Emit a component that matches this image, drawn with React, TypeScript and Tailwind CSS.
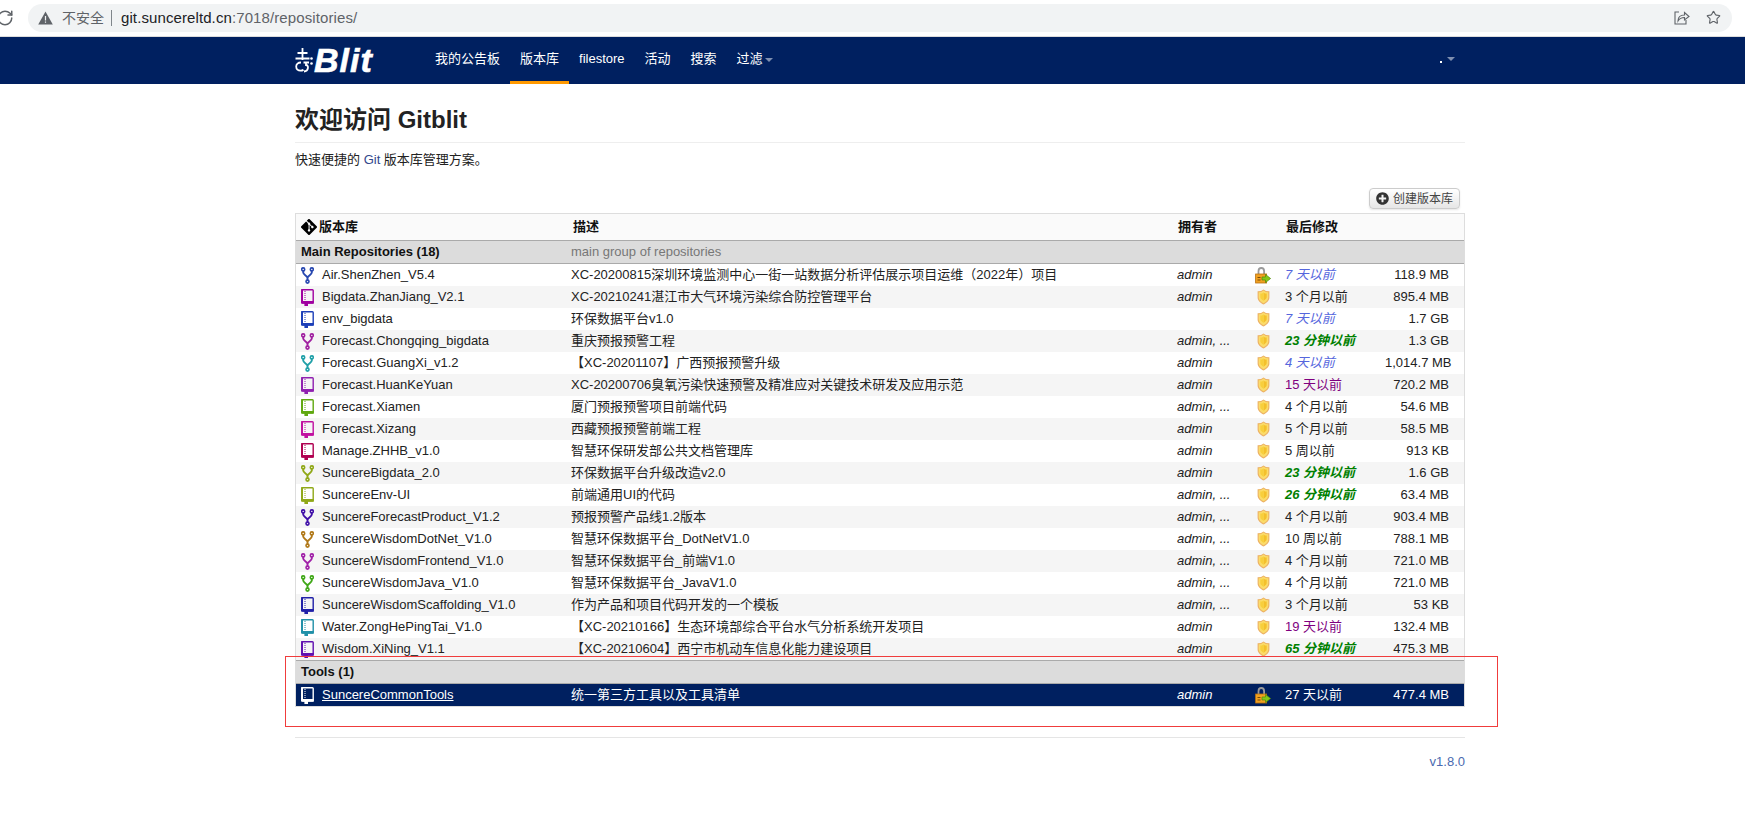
import React from "react";
import { RotateCw, Star } from "lucide-react";
import { SiGit } from "react-icons/si";
import { FaPlusCircle } from "react-icons/fa";

type Repo = { name: string; desc: string; owner: string; lock?: boolean; time: string; kind?: "blue" | "green" | "purple"; size: string; icon: "fork" | "book"; color: string };

const repos: Repo[] = [
  { name: "Air.ShenZhen_V5.4", desc: "XC-20200815深圳环境监测中心一街一站数据分析评估展示项目运维（2022年）项目", owner: "admin", lock: true, time: "7 天以前", kind: "blue", size: "118.9 MB", icon: "fork", color: "#2848b0" },
  { name: "Bigdata.ZhanJiang_V2.1", desc: "XC-20210241湛江市大气环境污染综合防控管理平台", owner: "admin", time: "3 个月以前", size: "895.4 MB", icon: "book", color: "#a000a0" },
  { name: "env_bigdata", desc: "环保数据平台v1.0", owner: "", time: "7 天以前", kind: "blue", size: "1.7 GB", icon: "book", color: "#1c3fb8" },
  { name: "Forecast.Chongqing_bigdata", desc: "重庆预报预警工程", owner: "admin, ...", time: "23 分钟以前", kind: "green", size: "1.3 GB", icon: "fork", color: "#a020a0" },
  { name: "Forecast.GuangXi_v1.2", desc: "【XC-20201107】广西预报预警升级", owner: "admin", time: "4 天以前", kind: "blue", size: "1,014.7 MB", icon: "fork", color: "#20a0a8" },
  { name: "Forecast.HuanKeYuan", desc: "XC-20200706臭氧污染快速预警及精准应对关键技术研发及应用示范", owner: "admin", time: "15 天以前", kind: "purple", size: "720.2 MB", icon: "book", color: "#9020b0" },
  { name: "Forecast.Xiamen", desc: "厦门预报预警项目前端代码", owner: "admin, ...", time: "4 个月以前", size: "54.6 MB", icon: "book", color: "#60a810" },
  { name: "Forecast.Xizang", desc: "西藏预报预警前端工程", owner: "admin", time: "5 个月以前", size: "58.5 MB", icon: "book", color: "#c010a0" },
  { name: "Manage.ZHHB_v1.0", desc: "智慧环保研发部公共文档管理库", owner: "admin", time: "5 周以前", size: "913 KB", icon: "book", color: "#b00050" },
  { name: "SuncereBigdata_2.0", desc: "环保数据平台升级改造v2.0", owner: "admin", time: "23 分钟以前", kind: "green", size: "1.6 GB", icon: "fork", color: "#90a818" },
  { name: "SuncereEnv-UI", desc: "前端通用UI的代码", owner: "admin, ...", time: "26 分钟以前", kind: "green", size: "63.4 MB", icon: "book", color: "#90a818" },
  { name: "SuncereForecastProduct_V1.2", desc: "预报预警产品线1.2版本", owner: "admin, ...", time: "4 个月以前", size: "903.4 MB", icon: "fork", color: "#4010a8" },
  { name: "SuncereWisdomDotNet_V1.0", desc: "智慧环保数据平台_DotNetV1.0", owner: "admin, ...", time: "10 周以前", size: "788.1 MB", icon: "fork", color: "#b07818" },
  { name: "SuncereWisdomFrontend_V1.0", desc: "智慧环保数据平台_前端V1.0", owner: "admin, ...", time: "4 个月以前", size: "721.0 MB", icon: "fork", color: "#a020a8" },
  { name: "SuncereWisdomJava_V1.0", desc: "智慧环保数据平台_JavaV1.0", owner: "admin, ...", time: "4 个月以前", size: "721.0 MB", icon: "fork", color: "#40a818" },
  { name: "SuncereWisdomScaffolding_V1.0", desc: "作为产品和项目代码开发的一个模板", owner: "admin, ...", time: "3 个月以前", size: "53 KB", icon: "book", color: "#2020a8" },
  { name: "Water.ZongHePingTai_V1.0", desc: "【XC-20210166】生态环境部综合平台水气分析系统开发项目", owner: "admin", time: "19 天以前", kind: "purple", size: "132.4 MB", icon: "book", color: "#2090a8" },
  { name: "Wisdom.XiNing_V1.1", desc: "【XC-20210604】西宁市机动车信息化能力建设项目", owner: "admin", time: "65 分钟以前", kind: "green", size: "475.3 MB", icon: "book", color: "#6010b0" },
];

const cols = "grid grid-cols-[275px_606px_78px_30px_100px_79px] items-center";

function Fork({ color }: { color: string }) {
  return (
    <svg width="13" height="17" viewBox="0 0 13 17" fill="none" stroke={color} strokeWidth="1.6">
      <circle cx="2.2" cy="2.4" r="1.5" />
      <circle cx="10.8" cy="2.4" r="1.5" />
      <circle cx="6.5" cy="14.6" r="1.5" />
      <path d="M2.2 4v1.6c0 2.2 4.3 3 4.3 5.4v2M10.8 4v1.6c0 2.2-4.3 3-4.3 5.4" strokeWidth="1.9" />
    </svg>
  );
}

function Book({ color }: { color: string }) {
  return (
    <svg width="13" height="17" viewBox="0 0 13 17" fill="none">
      <rect x="0.8" y="0.7" width="11.4" height="13.3" rx="0.8" stroke={color} strokeWidth="1.4" />
      <rect x="0.2" y="0" width="1.8" height="14" fill={color} />
      <rect x="0.2" y="12" width="12.6" height="2.6" fill={color} />
      <rect x="3.4" y="14" width="3.6" height="3" fill={color} />
      <path d="M4 2v9.500" stroke={color} strokeWidth="1" strokeDasharray="1 1" />
    </svg>
  );
}

function Shield() {
  return (
    <svg width="13" height="16" viewBox="0 0 13 16">
      <path d="M6.500 0.400 9 2l3.400.2v6.300c0 3.200-3 5.600-5.900 7.100C3.600 14.100.6 11.700.6 8.500V2.200L4 2z" fill="#ecb266" />
      <path d="M6.500 1.600 8.700 3l2.600.2v5.200c0 2.600-2.500 4.700-4.800 5.900-2.300-1.200-4.800-3.300-4.800-5.900V3.200L4.300 3z" fill="#fbdc6a" />
      <path d="M6.500 3.400v8.400c1.600-1 3.200-2.200 3.200-3.800V4.500L8 4.400z" fill="#f4c02c" />
      <path d="M6.500 3.400v8.400c-1.600-1-3.200-2.200-3.200-3.800V4.500L5 4.400z" fill="#f8cf3c" />
    </svg>
  );
}

function Lock() {
  return (
    <svg width="16" height="17" viewBox="0 0 16 17">
      <path d="M3.500 7V4.200C3.500 2.300 4.700 1 6.300 1s2.800 1.300 2.800 3.200V7" fill="none" stroke="#9a9a9a" strokeWidth="1.800" />
      <rect x="0.600" y="7" width="11" height="9" fill="#f0a020" stroke="#b87010" strokeWidth="0.800" />
      <rect x="2.500" y="10" width="3" height="1" fill="#7a4a08" />
      <rect x="2.500" y="12.500" width="3" height="1" fill="#7a4a08" />
      <path d="M7 10h3.500V7.400L15.600 11.500l-5.100 4.100V13H7z" fill="#84c818" stroke="#4f8a08" strokeWidth="0.700" />
    </svg>
  );
}

function LogoMark() {
  return (
    <svg width="19" height="25" viewBox="0 0 19 25" fill="none" stroke="#ffffff" strokeWidth="1.800">
      <path d="M7.500 0v12M2.500 5h10M0.500 10.500h14" />
      <path d="M6 14.500c-3 0-4.800 1.600-4.800 4s1.800 4.200 4.300 4.200c1.300 0 2.200-.4 3-1" />
      <path d="M8.500 14.500h5.500M11 14.500v2.500c3 0 2.800 6-2 6.500" />
      <circle cx="16.500" cy="10.500" r="1.300" fill="#ffffff" stroke="none" />
      <circle cx="16.500" cy="15.500" r="1.300" fill="#ffffff" stroke="none" />
    </svg>
  );
}

function Row({ repo, index }: { repo: Repo; index: number }) {
  const bg = index % 2 === 1 ? "bg-[#f5f5f5]" : "bg-white";
  const timeClass =
    repo.kind === "blue"
      ? "italic text-[#5566dd]"
      : repo.kind === "green"
        ? "italic font-bold text-[#008000]"
        : repo.kind === "purple"
          ? "text-[#800080]"
          : "";
  return (
    <div className={`${cols} h-[22px] ${bg}`}>
      <div className="flex items-center pl-[5px] gap-[8px] whitespace-nowrap">
        {repo.icon === "fork" ? <Fork color={repo.color} /> : <Book color={repo.color} />}
        <span>{repo.name}</span>
      </div>
      <div className="whitespace-nowrap">{repo.desc}</div>
      <div className="italic whitespace-nowrap">{repo.owner}</div>
      <div className="flex w-[16px] justify-center">{repo.lock ? <Lock /> : <Shield />}</div>
      <div className={`whitespace-nowrap ${timeClass}`}>{repo.time}</div>
      <div className="text-right pr-[15px] whitespace-nowrap">{repo.size}</div>
    </div>
  );
}

function GroupRow({ title, desc }: { title: string; desc?: string }) {
  return (
    <div className={`${cols} h-[24px] bg-[#dcdcdc] border-y border-[#aaaaaa]`}>
      <div className="pl-[5px] font-bold text-[#111]">{title}</div>
      <div className="text-[#777777]">{desc}</div>
    </div>
  );
}

export default function App() {
  return (
    <div className="relative h-[831px] overflow-hidden bg-white text-[13px] leading-[18px] text-[#222222] font-['Liberation_Sans','Noto_Sans_CJK_SC',sans-serif]">
      <div className="flex h-[37px] items-center border-b border-[#dddddd] pb-[1px]">
        <RotateCw size={18} strokeWidth={2} className="-ml-[4px] text-[#5f6368]" />
        <div className="ml-[14px] flex h-[28px] w-[1704px] items-center rounded-full bg-[#f1f3f4] pl-[10px] pr-[11px]">
          <svg width="15" height="14" viewBox="0 0 15 14" fill="#5f6368">
            <path d="M7.500 0.500 14.800 13.500H0.200z" />
            <path d="M6.900 5h1.200v4.500H6.900zM6.900 10.400h1.200v1.300H6.900z" fill="#f1f3f4" />
          </svg>
          <span className="ml-[9px] text-[14px] text-[#5f6368]">不安全</span>
          <span className="ml-[7px] h-[16px] w-px bg-[#80868b]" />
          <span className="ml-[9px] text-[15px] tracking-[0.1px] text-[#202124]">
            git.suncereltd.cn<span className="text-[#5f6368]">:7018/repositories/</span>
          </span>
          <div className="ml-auto flex items-center gap-[16px]">
            <svg width="16" height="15" viewBox="0 0 16 15" fill="none" stroke="#5f6368" strokeWidth="1.100">
              <path d="M5 2H1v12h11v-4" />
              <path d="M4 11c0-4 2.500-6 6.500-6V2.500L15 6.500 10.500 10V7.500C7.500 7.500 5.500 8.500 4 11z" />
            </svg>
            <Star size={15} strokeWidth={1.800} className="text-[#5f6368]" />
          </div>
        </div>
      </div>

      <div className="h-[47px] bg-[#002060] text-white">
        <div className="ml-[295px] flex h-[47px] w-[1170px] items-stretch">
          <div className="flex w-[130px] items-center pb-[1px]">
            <LogoMark />
            <span className="font-bold italic text-[34px] leading-none tracking-[1px] [-webkit-text-stroke:0.6px_white]">Blit</span>
          </div>
          <div className="flex items-stretch">
            <a className="flex items-center px-[10px] pb-[3px]">我的公告板</a>
            <a className="flex items-center border-b-[3px] border-[#ff9900] px-[10px]">版本库</a>
            <a className="flex items-center px-[10px] pb-[3px]">filestore</a>
            <a className="flex items-center px-[10px] pb-[3px]">活动</a>
            <a className="flex items-center px-[10px] pb-[3px]">搜索</a>
            <a className="flex items-center gap-[2px] px-[10px] pb-[3px]">
              过滤
              <span className="mt-[1px] h-0 w-0 border-x-[4px] border-t-[4px] border-x-transparent border-t-[#7f8fb0]" />
            </a>
          </div>
          <div className="ml-auto mr-[10px] flex items-center gap-[5px] pb-[3px]">
            <span className="mt-[6px] h-[2px] w-[2px] bg-white" />
            <span className="h-0 w-0 border-x-[4px] border-t-[4px] border-x-transparent border-t-[#7f8fb0]" />
          </div>
        </div>
      </div>

      <div className="ml-[295px] w-[1170px]">
        <h1 className="border-b border-[#eeeeee] pt-[21px] pb-[7px] text-[24px] leading-[30px] font-bold">欢迎访问 Gitblit</h1>
        <p className="mt-[8px]">
          快速便捷的 <span className="text-[#33478c]">Git</span> 版本库管理方案。
        </p>
        <div className="mt-[19px] flex justify-end pr-[5px]">
          <button className="flex h-[21px] w-[91px] items-center justify-center gap-[4px] rounded-[4px] border border-[#cccccc] bg-gradient-to-b from-white to-[#e6e6e6] text-[12px] text-[#444444] shadow-[0_1px_2px_rgba(0,0,0,0.1)]">
            <FaPlusCircle size={13} className="text-[#333333]" />
            创建版本库
          </button>
        </div>
        <div className="mt-[4px] border border-t-[1px] border-[#dddddd]">
          <div className={`${cols} h-[26px] bg-[#fafafa] font-bold text-[#111]`}>
            <div className="flex items-center gap-[2px] pl-[5px]">
              <SiGit size={16} className="text-black" />
              版本库
            </div>
            <div className="pl-[2px]">描述</div>
            <div className="pl-[1px]">拥有者</div>
            <div />
            <div className="pl-[1px]">最后修改</div>
            <div />
          </div>
          <GroupRow title="Main Repositories (18)" desc="main group of repositories" />
          {repos.map((r, i) => (
            <Row key={r.name} repo={r} index={i} />
          ))}
          <GroupRow title="Tools (1)" />
          <div className={`${cols} h-[22px] bg-[#002060] text-white`}>
            <div className="flex items-center gap-[8px] pl-[5px]">
              <Book color="#ffffff" />
              <span className="underline">SuncereCommonTools</span>
            </div>
            <div>统一第三方工具以及工具清单</div>
            <div className="italic">admin</div>
            <div className="flex w-[16px] justify-center">
              <Lock />
            </div>
            <div>27 天以前</div>
            <div className="pr-[15px] text-right">477.4 MB</div>
          </div>
        </div>
        <div className="mt-[30px] border-t border-[#e5e5e5] pt-[15px] text-right text-[#4a6ab0]">v1.8.0</div>
      </div>

      <div className="pointer-events-none absolute left-[285px] top-[656px] h-[71px] w-[1213px] border border-[#f03c3c]" />
    </div>
  );
}
